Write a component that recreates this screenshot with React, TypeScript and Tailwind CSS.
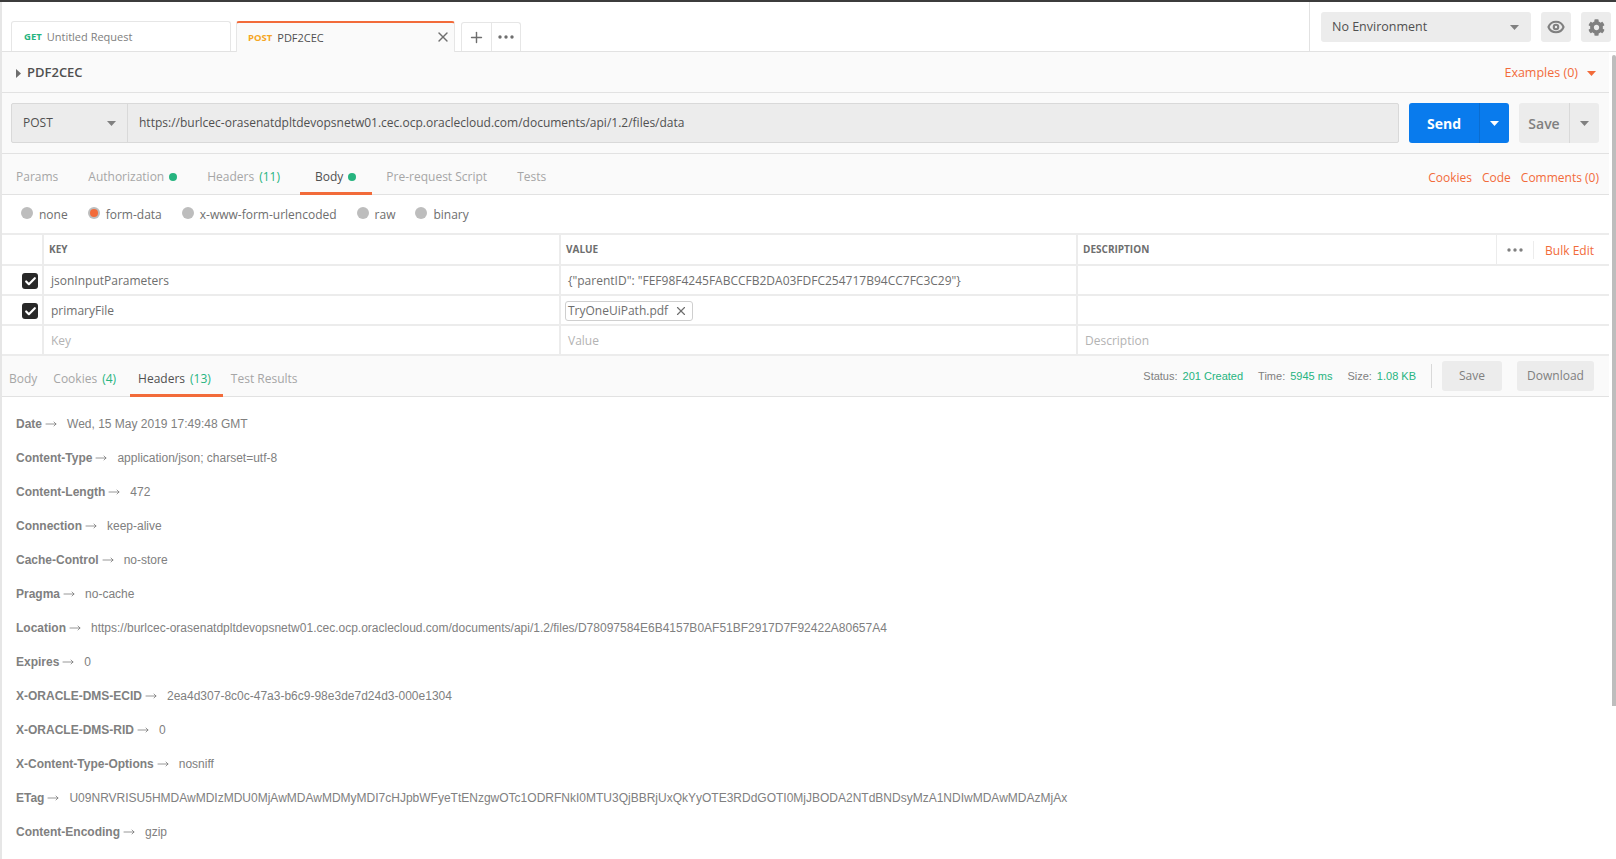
import { Plus, X, Eye, Check, MoveRight } from 'lucide-react';
import { FaCog } from 'react-icons/fa';

const sans = "font-['Open_Sans',sans-serif]";

const Caret = ({ className }: { className: string }) => (
  <svg width="9" height="5" viewBox="0 0 9 5" className={className}>
    <path d="M0 0h9L4.5 5z" fill="currentColor" />
  </svg>
);

const Dots = ({ className = 'text-[#6e6e6e]' }: { className?: string }) => (
  <svg width="16" height="4" viewBox="0 0 16 4" className={className}>
    <circle cx="2" cy="2" r="1.7" fill="currentColor" />
    <circle cx="8" cy="2" r="1.7" fill="currentColor" />
    <circle cx="14" cy="2" r="1.7" fill="currentColor" />
  </svg>
);

const headers: [string, string][] = [
  ['Date', 'Wed, 15 May 2019 17:49:48 GMT'],
  ['Content-Type', 'application/json; charset=utf-8'],
  ['Content-Length', '472'],
  ['Connection', 'keep-alive'],
  ['Cache-Control', 'no-store'],
  ['Pragma', 'no-cache'],
  ['Location', 'https://burlcec-orasenatdpltdevopsnetw01.cec.ocp.oraclecloud.com/documents/api/1.2/files/D78097584E6B4157B0AF51BF2917D7F92422A80657A4'],
  ['Expires', '0'],
  ['X-ORACLE-DMS-ECID', '2ea4d307-8c0c-47a3-b6c9-98e3de7d24d3-000e1304'],
  ['X-ORACLE-DMS-RID', '0'],
  ['X-Content-Type-Options', 'nosniff'],
  ['ETag', 'U09NRVRISU5HMDAwMDIzMDU0MjAwMDAwMDMyMDI7cHJpbWFyeTtENzgwOTc1ODRFNkI0MTU3QjBBRjUxQkYyOTE3RDdGOTI0MjJBODA2NTdBNDsyMzA1NDIwMDAwMDAzMjAx'],
  ['Content-Encoding', 'gzip'],
];

const Row = ({
  checked,
  keyText,
  value,
  placeholder,
}: {
  checked?: boolean;
  keyText: string;
  value?: React.ReactNode;
  placeholder?: boolean;
}) => (
  <div className="flex h-[30px] border-b-2 border-[#ececec] bg-white text-[12px]">
    <div className="flex w-[42px] shrink-0 items-center justify-end border-r-2 border-[#ececec] bg-white pr-[4px] pt-[2px]">
      {checked && (
        <span className="flex h-4 w-4 items-center justify-center rounded-[3px] bg-[#282828]">
          <Check size={13} strokeWidth={4} className="text-white" />
        </span>
      )}
    </div>
    <div className={`flex w-[517px] shrink-0 items-center border-r-2 border-[#ececec] pl-[7px] pt-[2px] ${placeholder ? 'text-[#b3b3b3]' : 'text-[#6e6e6e]'}`}>
      {keyText}
    </div>
    <div className={`flex w-[517px] shrink-0 items-center border-r-2 border-[#ececec] pl-[7px] pt-[2px] ${placeholder ? 'text-[#b3b3b3]' : 'text-[#6e6e6e]'}`}>
      {value}
    </div>
    <div className="flex flex-1 items-center pl-[7px] pt-[2px] text-[#b3b3b3]">{placeholder ? 'Description' : ''}</div>
  </div>
);

export default function App() {
  return (
    <div className={`${sans} flex h-[859px] w-[1616px] flex-col overflow-hidden bg-white text-[#505050]`}>
      <div className="h-[2px] shrink-0 bg-[#3c3c3c]" />

      <div className="flex min-h-0 flex-1">
        <div className="w-[2px] shrink-0 bg-[#e6e6e6]" />
        <div className="flex min-w-0 flex-1 flex-col">
          {/* Tab strip */}
          <div className="flex h-[50px] shrink-0 border-b border-[#e2e2e2]">
            <div className="flex min-w-0 flex-1 items-end pl-[9px]">
              <div className="flex h-[30px] w-[220px] items-center rounded-t-[3px] border border-b-0 border-[#e6e6e6] pl-[12px] pt-[1px] text-[11px]">
                <span className="mr-[5px] text-[9.5px] font-bold text-[#26b47f]">GET</span>
                <span className="text-[#808080]">Untitled Request</span>
              </div>
              <div className="relative z-10 ml-[5px] -mb-px flex h-[31px] w-[219px] items-center rounded-t-[3px] border-x border-t-2 border-[#e6e6e6] border-t-[#f26b3a] bg-[#fafafa] pl-[11px] pt-[1px] text-[11px]">
                <span className="mr-[5px] text-[9.5px] font-bold text-[#f5a623]">POST</span>
                <span className="text-[#505050]">PDF2CEC</span>
                <X size={16} strokeWidth={2} className="absolute right-[3px] top-[6px] text-[#6e6e6e]" />
              </div>
              <div className="ml-[6px] flex h-[29px] items-stretch rounded-t-[3px] border border-b-0 border-[#e6e6e6]">
                <div className="flex w-[30px] items-center justify-center border-r border-[#e6e6e6]">
                  <Plus size={17} strokeWidth={2} className="text-[#6e6e6e]" />
                </div>
                <div className="flex w-[28px] items-center justify-center">
                  <Dots />
                </div>
              </div>
            </div>
            <div className="flex w-[307px] shrink-0 items-start gap-[10px] border-l border-[#e2e2e2] pl-[11px] pt-[10px]">
              <div className="flex h-[30px] w-[210px] items-center justify-between rounded-[3px] bg-[#ececec] pl-[11px] pr-[12px] text-[12.5px] text-[#505050]">
                No Environment
                <Caret className="text-[#808080]" />
              </div>
              <div className="flex h-[30px] w-[30px] items-center justify-center rounded-[3px] bg-[#ececec]">
                <Eye size={18} strokeWidth={2.8} className="text-[#808080]" />
              </div>
              <div className="flex h-[30px] w-[30px] items-center justify-center rounded-[3px] bg-[#ececec]">
                <FaCog size={17} className="text-[#808080]" />
              </div>
            </div>
          </div>

          {/* Request pane */}
          <div className="flex min-h-0 flex-1">
            <div className="flex min-w-0 flex-1 flex-col">
              <div className="shrink-0 bg-[#fafafa]">
                <div className="flex h-[41px] items-center border-b border-[#e2e2e2] pl-[14px] pr-[13px] pt-[2px]">
                  <svg width="5" height="9" viewBox="0 0 5 9" className="mr-[6px] text-[#6e6e6e]">
                    <path d="M0 0l5 4.5L0 9z" fill="currentColor" />
                  </svg>
                  <span className="text-[13px] font-semibold text-[#505050]">PDF2CEC</span>
                  <span className="ml-auto text-[12.5px] text-[#f26b3a]">Examples (0)</span>
                  <Caret className="ml-[9px] text-[#f26b3a]" />
                </div>

                <div className="flex h-[61px] items-center border-b border-[#e2e2e2] pl-[9px] pr-[10px]">
                  <div className="flex h-[40px] w-[1388px] items-center rounded-[2px] border border-[#d9d9d9] bg-[#ececec] text-[#505050]">
                    <div className="flex h-full w-[116px] items-center justify-between border-r border-[#d9d9d9] pl-[11px] pr-[11px] text-[12px]">
                      POST
                      <Caret className="text-[#808080]" />
                    </div>
                    <span className="pl-[11px] text-[12px]">
                      https://burlcec-orasenatdpltdevopsnetw01.cec.ocp.oraclecloud.com/documents/api/1.2/files/data
                    </span>
                  </div>
                  <div className="ml-[10px] flex h-[40px] w-[100px] items-center rounded-[3px] bg-[#097bed] text-white">
                    <span className="flex-1 text-center text-[14px] font-bold">Send</span>
                    <span className="flex h-full w-[30px] items-center justify-center border-l border-[#0a6dd1]">
                      <Caret className="text-white" />
                    </span>
                  </div>
                  <div className="ml-[10px] flex h-[40px] w-[80px] items-center rounded-[3px] bg-[#ececec] text-[#808080]">
                    <span className="flex-1 text-center text-[14px] font-semibold">Save</span>
                    <span className="flex h-full w-[30px] items-center justify-center border-l border-[#d9d9d9]">
                      <Caret className="text-[#808080]" />
                    </span>
                  </div>
                </div>

                <div className="flex h-[41px] items-stretch border-b border-[#e2e2e2] pl-[14px] pr-[10px] text-[12px] text-[#a6a6a6]">
                  <div className="flex items-center pt-[6px]">Params</div>
                  <div className="ml-[30px] flex items-center pt-[6px]">
                    Authorization
                    <span className="ml-[5px] h-2 w-2 rounded-full bg-[#26b47f]" />
                  </div>
                  <div className="ml-[30px] flex items-center pt-[6px]">
                    Headers<span className="ml-[5px] text-[#26b47f]">(11)</span>
                  </div>
                  <div className="relative ml-[20px] flex items-center pl-[15px] pr-[16px] pt-[6px] text-[#505050]">
                    Body
                    <span className="ml-[5px] h-2 w-2 rounded-full bg-[#26b47f]" />
                    <span className="absolute inset-x-0 -bottom-px h-[3px] bg-[#f26b3a]" />
                  </div>
                  <div className="ml-[14px] flex items-center pt-[6px]">Pre-request Script</div>
                  <div className="ml-[30px] flex items-center pt-[6px]">Tests</div>
                  <div className="ml-auto flex items-center gap-[10px] pt-[8px] text-[#f26b3a]">
                    <span>Cookies</span>
                    <span>Code</span>
                    <span>Comments (0)</span>
                  </div>
                </div>
              </div>

              <div className="flex h-[38px] shrink-0 items-center pl-[19px] text-[12px] text-[#6e6e6e]">
                {['none', 'form-data', 'x-www-form-urlencoded', 'raw', 'binary'].map((label, i) => (
                  <div key={label} className="mr-[20px] flex items-center pt-[2px]">
                    <span className="mr-[6px] -mt-[5px] flex h-3 w-3 items-center justify-center rounded-full bg-[#bdbdbd]">
                      {i === 1 && <span className="h-2 w-2 rounded-full bg-[#f26b3a]" />}
                    </span>
                    {label}
                  </div>
                ))}
              </div>

              {/* Params table */}
              <div className="shrink-0 border-t-2 border-[#ececec]">
                <div className="flex h-[31px] border-b-2 border-[#ececec] bg-white text-[10px] font-bold text-[#6e6e6e]">
                  <div className="w-[42px] shrink-0 border-r-2 border-[#ececec]" />
                  <div className="flex w-[517px] shrink-0 items-center border-r-2 border-[#ececec] pl-[5px]">KEY</div>
                  <div className="flex w-[517px] shrink-0 items-center border-r-2 border-[#ececec] pl-[5px]">VALUE</div>
                  <div className="flex flex-1 items-center pl-[5px]">
                    DESCRIPTION
                    <div className="ml-auto flex h-full items-center pr-[15px]">
                      <div className="flex h-full w-[37px] items-center justify-center border-l border-[#ececec]">
                        <Dots className="text-[#808080]" />
                      </div>
                      <div className="flex h-[18px] items-center border-l border-[#ececec] pl-[11px] pt-[2px] text-[12px] font-normal text-[#f26b3a]">
                        Bulk Edit
                      </div>
                    </div>
                  </div>
                </div>
                <Row
                  checked
                  keyText="jsonInputParameters"
                  value={'{"parentID": "FEF98F4245FABCCFB2DA03FDFC254717B94CC7FC3C29"}'}
                />
                <Row
                  checked
                  keyText="primaryFile"
                  value={
                    <span className="-ml-[3px] flex h-[20px] items-center rounded-[3px] border border-[#cfcfcf] pl-[2px] pr-[4px]">
                      TryOneUiPath.pdf
                      <X size={14} strokeWidth={2} className="ml-[6px] text-[#6e6e6e]" />
                    </span>
                  }
                />
                <Row placeholder keyText="Key" value="Value" />
              </div>

              {/* Response bar */}
              <div className="flex h-[41px] shrink-0 items-stretch border-b border-[#e2e2e2] bg-[#fafafa] pl-[7px] text-[12px] text-[#a6a6a6]">
                <div className="flex items-center pt-[6px]">Body</div>
                <div className="ml-[16px] flex items-center pt-[6px]">
                  Cookies<span className="ml-[5px] text-[#26b47f]">(4)</span>
                </div>
                <div className="relative ml-[14px] flex items-center pl-[8px] pr-[12px] pt-[6px] text-[#505050]">
                  Headers<span className="ml-[5px] text-[#26b47f]">(13)</span>
                  <span className="absolute inset-x-0 -bottom-px h-[3px] bg-[#f26b3a]" />
                </div>
                <div className="ml-[8px] flex items-center pt-[6px]">Test Results</div>
                <div className="ml-auto flex items-center pr-[15px] font-['Liberation_Sans',sans-serif] text-[11px] text-[#808080]">
                  <span>Status:</span>
                  <span className="ml-[5px] text-[#26b47f]">201 Created</span>
                  <span className="ml-[15px]">Time:</span>
                  <span className="ml-[5px] text-[#26b47f]">5945 ms</span>
                  <span className="ml-[15px]">Size:</span>
                  <span className="ml-[5px] text-[#26b47f]">1.08 KB</span>
                  <span className="ml-[15px] h-6 w-px bg-[#d9d9d9]" />
                  <span className={`${sans} ml-[10px] flex h-[30px] w-[60px] items-center justify-center rounded-[3px] bg-[#ececec] text-[12px] text-[#808080]`}>Save</span>
                  <span className={`${sans} ml-[15px] flex h-[30px] w-[77px] items-center justify-center rounded-[3px] bg-[#ececec] text-[12px] text-[#808080]`}>Download</span>
                </div>
              </div>

              {/* Response headers */}
              <div className="min-h-0 flex-1 overflow-hidden pl-[14px] pt-[10px] font-['Liberation_Sans',sans-serif] text-[12px] text-[#808080]">
                {headers.map(([name, value]) => (
                  <div key={name} className="flex h-[34px] items-center whitespace-nowrap">
                    <span className="font-bold">{name}</span>
                    <MoveRight size={12} strokeWidth={1.3} className="ml-[3px] text-[#606060]" />
                    <span className="ml-[10px]">{value}</span>
                  </div>
                ))}
              </div>
            </div>

            {/* Scrollbar */}
            <div className="w-[7px] shrink-0 bg-white pl-[3px] pt-[3px]">
              <div className="h-[651px] rounded-t-[2px] bg-[#bdbdbd]" />
            </div>
          </div>
        </div>
      </div>
    </div>
  );
}
